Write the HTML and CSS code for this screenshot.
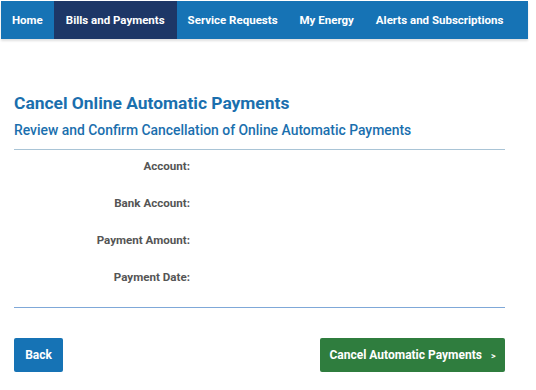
FILE: index.html
```html
<!DOCTYPE html>
<html lang="en">
<head>
    <meta charset="UTF-8">
    <meta name="viewport" content="width=device-width, initial-scale=1.0">
    <title>Cancel Online Automatic Payments</title>
    <link rel="stylesheet" href="styles.css">
</head>
<body>
    <nav class="topnav">
        <a href="#">Home</a>
        <a href="#" class="active">Bills and Payments</a>
        <a href="#">Service Requests</a>
        <a href="#">My Energy</a>
        <a href="#">Alerts and Subscriptions</a>
    </nav>

    <div class="content">
        <h1>Cancel Online Automatic Payments</h1>
        <h2>Review and Confirm Cancellation of Online Automatic Payments</h2>

        <div class="details">
            <div class="row"><span class="label">Account:</span><span class="value"></span></div>
            <div class="row"><span class="label">Bank Account:</span><span class="value"></span></div>
            <div class="row"><span class="label">Payment Amount:</span><span class="value"></span></div>
            <div class="row"><span class="label">Payment Date:</span><span class="value"></span></div>
        </div>

        <div class="actions">
            <button class="btn btn-back">Back</button>
            <button class="btn btn-cancel">Cancel Automatic Payments <span class="arrow">&gt;</span></button>
        </div>
    </div>
</body>
</html>
```

FILE: styles.css
```css
body {
    font-family: Roboto, Arial, sans-serif;
    background-color: #ffffff;
    margin: 0;
    padding: 1px 8px 0 1px;
}
.topnav {
    display: flex;
    height: 38px;
    background-color: #1673b5;
    box-shadow: 0 2px 2px rgba(0, 0, 0, 0.12);
}
.topnav a {
    display: flex;
    align-items: center;
    padding: 0 11px;
    color: #ffffff;
    font-size: 11.5px;
    font-weight: 700;
    white-space: nowrap;
    text-decoration: none;
}
.topnav a.active {
    background-color: #1d3767;
    padding: 0 12px;
}
.content {
    padding: 53px 23px 0 13px;
}
h1 {
    margin: 0;
    color: #1a6fae;
    font-size: 17.4px;
    font-weight: 700;
    line-height: 22px;
}
h2 {
    margin: 7px 0 0;
    color: #1a6fae;
    font-size: 13.9px;
    font-weight: 500;
    line-height: 18px;
}
.details {
    margin-top: 10px;
    border-top: 1px solid #a9c4d6;
    border-bottom: 1px solid #7fa8d8;
    padding: 0 0 9px;
}
.row {
    display: grid;
    grid-template-columns: 176px 1fr;
    height: 37px;
    align-items: start;
    padding-top: 9px;
    box-sizing: border-box;
}
.label {
    text-align: right;
    color: #555555;
    font-size: 11.6px;
    font-weight: 700;
}
.actions {
    display: flex;
    justify-content: space-between;
    margin-top: 30px;
}
.btn {
    height: 34px;
    border: none;
    border-radius: 2px;
    color: #ffffff;
    font-family: Roboto, Arial, sans-serif;
    font-size: 12px;
    font-weight: 700;
    white-space: nowrap;
    cursor: pointer;
}
.btn-back {
    width: 49px;
    background-color: #1673b5;
}
.btn-cancel {
    width: 185px;
    background-color: #2f7d3e;
}
.arrow {
    margin-left: 6px;
    font-size: 9px;
}
```
